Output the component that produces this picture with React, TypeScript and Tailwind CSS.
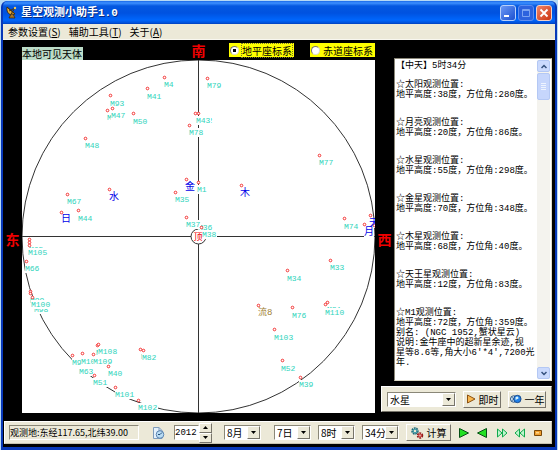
import type { ReactNode } from "react";

type Mark = { text: string; x: number; y: number; dots?: [number, number][]; kind?: "planet" | "meteor" };

const MARKS: Mark[] = [
  { text: "M4", x: 164, y: 84, dots: [[164, 77]] },
  { text: "M41", x: 147, y: 96, dots: [[147, 88]] },
  { text: "M93", x: 110, y: 103, dots: [[110, 95]] },
  { text: "M46", x: 107, y: 117, dots: [[107, 110]] },
  { text: "M47", x: 111, y: 115, dots: [[112, 108]] },
  { text: "M50", x: 133, y: 121, dots: [[133, 113]] },
  { text: "M48", x: 85, y: 145, dots: [[85, 138]] },
  { text: "M42", x: 198, y: 120, dots: [[198, 113]] },
  { text: "M43", x: 196, y: 120, dots: [[195, 113]] },
  { text: "M78", x: 189, y: 132, dots: [[189, 125]] },
  { text: "M79", x: 207, y: 85, dots: [[207, 78]] },
  { text: "M67", x: 67, y: 201, dots: [[67, 194]] },
  { text: "日", x: 61, y: 218, dots: [[61, 212]], kind: "planet" },
  { text: "M44", x: 78, y: 218, dots: [[78, 210]] },
  { text: "水", x: 109, y: 196, dots: [[109, 189]], kind: "planet" },
  { text: "M35", x: 175, y: 199, dots: [[175, 192]] },
  { text: "M1", x: 197, y: 189, dots: [[198, 182]] },
  { text: "金", x: 185, y: 186, dots: [[186, 179]], kind: "planet" },
  { text: "M36", x: 198, y: 227 },
  { text: "M37", x: 186, y: 224, dots: [[186, 217]] },
  { text: "M38", x: 202, y: 234, dots: [[201, 227]] },
  { text: "木", x: 240, y: 192, dots: [[241, 185]], kind: "planet" },
  { text: "M77", x: 319, y: 162, dots: [[319, 155]] },
  { text: "M74", x: 344, y: 226, dots: [[344, 218]] },
  { text: "天", x: 369, y: 222, dots: [[370, 215], [374, 225]], kind: "planet" },
  { text: "月", x: 364, y: 231, dots: [[364, 224]], kind: "planet" },
  { text: "M33", x: 330, y: 267, dots: [[330, 260]] },
  { text: "M34", x: 287, y: 278, dots: [[287, 270]] },
  { text: "流8", x: 258, y: 312, dots: [[258, 305]], kind: "meteor" },
  { text: "M76", x: 292, y: 315, dots: [[292, 307]] },
  { text: "M31", x: 327, y: 309, dots: [[327, 302]] },
  { text: "M110", x: 325, y: 312, dots: [[325, 304]] },
  { text: "M103", x: 274, y: 337, dots: [[274, 329]] },
  { text: "M52", x: 281, y: 368, dots: [[282, 360]] },
  { text: "M39", x: 299, y: 384, dots: [[300, 377]] },
  { text: "M65", x: 29, y: 249, dots: [[29, 239], [29, 242]] },
  { text: "M105", x: 28, y: 252, dots: [[29, 245]] },
  { text: "M66", x: 25, y: 268, dots: [[26, 261]] },
  { text: "M99", x: 30, y: 300, dots: [[30, 291], [30, 293]] },
  { text: "M98", x: 34, y: 309 },
  { text: "M100", x: 31, y: 304, dots: [[32, 297]] },
  { text: "M106", x: 96, y: 352, dots: [[97, 345]] },
  { text: "M108", x: 98, y: 351, dots: [[98, 344]] },
  { text: "M97", x: 72, y: 362, dots: [[72, 355]] },
  { text: "M10", x: 81, y: 361, dots: [[82, 353]] },
  { text: "M109", x: 93, y: 361, dots: [[93, 354]] },
  { text: "M63", x: 79, y: 371 },
  { text: "M51", x: 93, y: 382, dots: [[94, 375]] },
  { text: "M40", x: 108, y: 373, dots: [[108, 366]] },
  { text: "M101", x: 115, y: 394, dots: [[115, 387]] },
  { text: "M102", x: 138, y: 407, dots: [[138, 400]] },
  { text: "M81", x: 141, y: 356, dots: [[140, 349]] },
  { text: "M82", x: 142, y: 357, dots: [[143, 350]] },
];

const REPORT: string[][] = [
  ["☆太阳观测位置:", "地平高度:38度，方位角:280度。"],
  ["☆月亮观测位置:", "地平高度:20度，方位角:86度。"],
  ["☆水星观测位置:", "地平高度:55度，方位角:298度。"],
  ["☆金星观测位置:", "地平高度:70度，方位角:348度。"],
  ["☆木星观测位置:", "地平高度:68度，方位角:40度。"],
  ["☆天王星观测位置:", "地平高度:12度，方位角:83度。"],
  [
    "☆M1观测位置:",
    "地平高度:72度，方位角:359度。",
    "别名: (NGC 1952,蟹状星云)",
    "说明:金牛座中的超新星余迹,视",
    "星等8.6等,角大小6'*4',7200光",
    "年.",
  ],
];

const MENUS: [string, string][] = [
  ["参数设置", "S"],
  ["辅助工具", "T"],
  ["关于", "A"],
];

const SUNKEN = "border border-t-[#8a8778] border-l-[#8a8778] border-r-white border-b-white";
const RAISED = "border border-t-white border-l-white border-r-[#77746a] border-b-[#77746a] bg-[#ece9d8]";

function Sky() {
  return (
    <svg
      viewBox="22 60 353 353"
      className="block aspect-square w-full bg-white font-['Liberation_Mono','Noto_Sans_CJK_SC',monospace]"
      role="img"
      aria-label="本地可见天体"
    >
      <g fill="none" stroke="#333" strokeWidth="1">
        <circle cx="198.5" cy="236.5" r="176.5" />
        <path d="M198.5 60V413M22 236.5H375" />
      </g>
      <circle cx="198.5" cy="236.5" r="7.5" fill="#fff" stroke="#333" />
      {MARKS.map((m) => {
        const wide = m.kind === "planet";
        const color = wide ? "#0000e8" : m.kind === "meteor" ? "#a08030" : "#30d4bc";
        const width = wide ? 10 : m.kind === "meteor" ? 14 : m.text.length * 5;
        return (
          <g key={m.text}>
            <rect x={m.x} y={m.y - 4} width={width} height={wide ? 10 : 9} fill="#fff" />
            {m.dots?.map(([x, y]) => (
              <circle key={`${x}-${y}`} cx={x + 0.5} cy={y + 0.5} r="1.3" fill="#fff" stroke="#f02020" strokeWidth="0.9" />
            ))}
            <text x={m.x} y={m.y + (wide ? 4 : 3)} fontSize={wide ? 10 : m.kind ? 9 : 8} fill={color}>
              {m.text}
            </text>
          </g>
        );
      })}
      <text x="198" y="240" textAnchor="middle" fontSize="9" fill="#f00000">顶</text>
    </svg>
  );
}

function Drop({ label, value, width, options }: { label: string; value: string; width: string; options: string[] }) {
  return (
    <div className={`relative h-[15px] shrink-0 bg-white ${width} ${SUNKEN}`}>
      <select
        aria-label={label}
        defaultValue={value}
        className="block h-full w-full appearance-none bg-transparent pl-[2px] text-[10px] leading-[13px] outline-none"
      >
        {options.map((o) => (
          <option key={o}>{o}</option>
        ))}
      </select>
      <span className={`pointer-events-none absolute inset-y-0 right-0 flex w-[13px] items-center justify-center ${RAISED}`}>
        <svg width="5" height="3" viewBox="0 0 5 3">
          <path d="M0 0H5L2.5 3Z" />
        </svg>
      </span>
    </div>
  );
}

function PushButton({ width, icon, children }: { width: string; icon: ReactNode; children: ReactNode }) {
  return (
    <button type="button" className={`flex h-[17px] shrink-0 items-center justify-center gap-[3px] whitespace-nowrap text-[10px] leading-[13px] ${width} ${RAISED}`}>
      {icon}
      {children}
    </button>
  );
}

function Radio({ label, checked }: { label: string; checked?: boolean }) {
  return (
    <label className="flex h-[14px] items-center gap-[3px] bg-[#ffff00] pr-[2px] pl-[1px] text-[10px] leading-[13px] text-black">
      <input
        type="radio"
        name="coordinates"
        defaultChecked={checked}
        className="h-[9px] w-[9px] appearance-none rounded-full border border-t-[#77746a] border-r-[#dddac8] border-b-[#dddac8] border-l-[#77746a] bg-white checked:bg-[radial-gradient(circle,#000_0_1.5px,#fff_2px)]"
      />
      <span className={checked ? "outline outline-1 outline-dotted outline-[#77742a]" : ""}>{label}</span>
    </label>
  );
}

type PlayName = "play" | "back" | "forward" | "rewind" | "stop";

function PlayButton({ label, name }: { label: string; name: PlayName }) {
  const flip = name === "back" || name === "rewind" ? "translate(12 0) scale(-1 1)" : undefined;
  return (
    <button type="button" aria-label={label}>
      <svg width="12" height="12" viewBox="0 0 12 12" className="shrink-0">
        <g transform={flip}>
          {(name === "play" || name === "back") && (
            <path d="M1.5 1.5L10.5 6L1.5 10.5Z" fill="#22e022" stroke="#064f16" />
          )}
          {(name === "forward" || name === "rewind") && (
            <path d="M1.5 2L6 6L1.5 10ZM6.5 2L11 6L6.5 10Z" fill="#c0f5cf" stroke="#0faa4c" />
          )}
          {name === "stop" && <path d="M2.5 3.5H9.5V8.5H2.5Z" fill="#f0a030" stroke="#7a4808" />}
          {name === "stop" && <path d="M4 5H7V6.5H4Z" fill="#ffd68a" />}
        </g>
      </svg>
    </button>
  );
}

function TitleBar() {
  const box = "flex h-4 w-4 items-center justify-center rounded-[3px] border";
  return (
    <header className="flex h-[23px] items-center justify-between rounded-t-[5px] bg-[linear-gradient(to_bottom,#1868e8_0,#3c90ff_2px,#0458e0_5px,#0052e0_12px,#0066fc_19px,#0050d8_22px,#003cb8_23px)] pr-[3px] pl-[3px]">
      <div className="flex items-center gap-1">
        <svg width="11" height="13" viewBox="0 0 11 13">
          <path d="M1 1Q0 7 5 9L9 8Z" fill="#e8ae38" stroke="#30220c" strokeWidth=".8" />
          <path d="M1 1L9 8M3 5L9 2M9 2L5 8" stroke="#4a3410" fill="none" />
          <path d="M5 8L3 12H9L7 8Z" fill="#a87424" stroke="#30220c" strokeWidth=".7" />
          <circle cx="9" cy="2" r="1.2" fill="#f5c956" />
        </svg>
        <h1 className="font-['Liberation_Mono','Noto_Sans_CJK_SC',monospace] text-[11px] leading-4 font-bold text-white [text-shadow:1px_1px_0_#062a80]">
          星空观测小助手1.0
        </h1>
      </div>
      <div className="flex gap-[2px]">
        <button type="button" aria-label="最小化" className={`${box} border-[#b8d0fa] bg-[linear-gradient(135deg,#6a98f5,#1c50d0)]`}>
          <svg width="10" height="10" viewBox="0 0 10 10"><path d="M1 7H6V9H1Z" fill="#fff" /></svg>
        </button>
        <button type="button" aria-label="最大化" disabled className={`${box} border-[#5a8cf0] bg-[#2c62de]`}>
          <svg width="10" height="10" viewBox="0 0 10 10" fill="none" stroke="#7ba3f2"><path d="M1.5 1.5H8.5V8.5H1.5ZM1.5 2.5H8.5" /></svg>
        </button>
        <button type="button" aria-label="关闭" className={`${box} border-[#f2cfc6] bg-[linear-gradient(135deg,#f08468,#cc3410)]`}>
          <svg width="10" height="10" viewBox="0 0 10 10"><path d="M1.5 1.5L8.5 8.5M8.5 1.5L1.5 8.5" stroke="#fff" strokeWidth="1.8" /></svg>
        </button>
      </div>
    </header>
  );
}

function ScrollButton({ label, up }: { label: string; up?: boolean }) {
  return (
    <button type="button" aria-label={label} className="flex h-[12px] w-full items-center justify-center rounded-[2px] border border-[#b4c8f4] bg-[#cbdafd]">
      <svg width="6" height="5" viewBox="0 0 6 5" fill="none" stroke="#34507c" strokeWidth="1.5">
        <path d={up ? "M.5 4L3 1.5L5.5 4" : "M.5 1L3 3.5L5.5 1"} />
      </svg>
    </button>
  );
}

function ReportPanel() {
  return (
    <div className="flex min-h-0 flex-1 border border-t-[#8a8778] border-l-[#8a8778] border-r-[#dddac8] border-b-[#dddac8] bg-white p-px">
      <div
        tabIndex={0}
        role="region"
        aria-label="观测结果"
        className="min-w-0 flex-1 overflow-hidden pt-px font-['Liberation_Mono','Noto_Sans_CJK_SC',monospace] text-[9px] leading-[10px] whitespace-nowrap outline-none"
      >
        <p className="pb-[9px]">【中天】5时34分</p>
        <div className="flex flex-col gap-[18px]">
          {REPORT.map((lines) => (
            <div key={lines[0]}>
              {lines.map((line) => (
                <p key={line}>{line}</p>
              ))}
            </div>
          ))}
        </div>
      </div>
      <div className="flex w-[13px] shrink-0 flex-col bg-[#f4f3ee]">
        <ScrollButton label="向上滚动" up />
        <div className="mt-px flex h-[27px] flex-col items-center justify-center gap-px rounded-[2px] border border-[#b4c8f4] bg-[#c6d6fc]">
          {[0, 1, 2, 3].map((n) => (
            <span key={n} className="h-px w-[5px] bg-[#eef4fe]" />
          ))}
        </div>
        <div className="flex-1" />
        <ScrollButton label="向下滚动" />
      </div>
    </div>
  );
}

function Controls() {
  return (
    <footer className="mt-2 mr-[3px] ml-px flex h-[23px] items-center gap-[7px] border border-t-white border-l-white border-r-[#c8c4b0] border-b-[#c8c4b0] bg-[#ece9d8] pr-[7px] pl-1">
      <p className={`mr-[6px] flex h-[15px] w-[130px] shrink-0 items-center text-[9px] whitespace-nowrap ${SUNKEN}`}>
        观测地:东经117.65,北纬39.00
      </p>
      <svg width="13" height="14" viewBox="0 0 13 14" className="shrink-0">
        <path d="M1.5 1.5H7L10 4.5V12.5H1.5Z" fill="#e4f1fc" stroke="#7e9cbc" />
        <path d="M7 1.5V5H10" fill="none" stroke="#7e9cbc" />
        <circle cx="8" cy="8.5" r="3.8" fill="#b8dcf4" stroke="#5c84b0" />
        <path d="M8 8.5L10 6.5M8 8.5H6" stroke="#244c78" fill="none" />
      </svg>
      <div className="mr-[5px] ml-[2px] flex shrink-0 items-center">
        <input
          aria-label="年"
          defaultValue="2012"
          className={`h-[15px] w-[25px] rounded-none bg-white font-['Liberation_Mono',monospace] text-[9px] outline-none ${SUNKEN}`}
        />
        <div className="flex w-[13px] flex-col">
          <button type="button" aria-label="增加年份" className={`flex h-[10px] items-center justify-center ${RAISED}`}>
            <svg width="5" height="3" viewBox="0 0 5 3"><path d="M0 3H5L2.5 0Z" /></svg>
          </button>
          <button type="button" aria-label="减少年份" className={`flex h-[10px] items-center justify-center ${RAISED}`}>
            <svg width="5" height="3" viewBox="0 0 5 3"><path d="M0 0H5L2.5 3Z" /></svg>
          </button>
        </div>
      </div>
      <div className="mr-[6px]">
        <Drop label="月" value="8月" width="w-[37px]" options={["7月", "8月", "9月"]} />
      </div>
      <Drop label="日" value="7日" width="w-[37px]" options={["6日", "7日", "8日"]} />
      <Drop label="时" value="8时" width="w-[37px]" options={["7时", "8时", "9时"]} />
      <Drop label="分" value="34分" width="w-[37px]" options={["33分", "34分", "35分"]} />
      <PushButton
        width="w-[45px]"
        icon={
          <svg width="13" height="12" viewBox="0 0 13 12" fill="none">
            <circle cx="4" cy="4" r="2.5" stroke="#236878" strokeWidth="2.5" strokeDasharray="1.5 .6" />
            <circle cx="4" cy="4" r="2" stroke="#3aa0ac" />
            <circle cx="9" cy="8.5" r="2" stroke="#8c1c1c" strokeWidth="2.5" strokeDasharray="1.4 .6" />
            <circle cx="9" cy="8.5" r="1.5" stroke="#e04848" />
          </svg>
        }
      >
        计算
      </PushButton>
      <div className="flex gap-[6px]">
        <PlayButton label="播放" name="play" />
        <PlayButton label="倒放" name="back" />
      </div>
      <div className="ml-auto flex gap-[6px]">
        <PlayButton label="快进" name="forward" />
        <PlayButton label="快退" name="rewind" />
        <PlayButton label="停止" name="stop" />
      </div>
    </footer>
  );
}

export default function App() {
  return (
    <div className="bg-[#b5d9f4] px-px pt-px font-['Noto_Sans_CJK_SC',sans-serif] text-black">
      <div className="rounded-t-[6px] bg-[#0838b8] px-[2px] pb-[3px]">
        <TitleBar />
        <nav className="flex h-4 items-center gap-2 border-b border-[#f8f7f0] bg-[#ece9d8] pl-[5px] text-[10px] leading-[14px]">
          {MENUS.map(([name, key]) => (
            <button type="button" key={name}>
              {name}(<u>{key}</u>)
            </button>
          ))}
        </nav>
        <main className="bg-black pb-[3px]">
          <div className="flex">
            <div className="flex w-[19px] shrink-0 items-center justify-center pt-6 text-[14px] leading-4 font-bold text-[#f00000]">
              东
            </div>
            <div className="min-w-0 flex-1">
              <div className="grid h-5 grid-cols-[1fr_auto_1fr] items-center">
                <h2 className="mt-[6px] justify-self-start bg-[#bcdcc8] pr-px text-[10px] leading-[13px]">本地可见天体</h2>
                <span className="text-[14px] leading-4 font-bold text-[#f00000]">南</span>
                <fieldset className="flex gap-4 justify-self-end">
                  <Radio label="地平座标系" checked />
                  <Radio label="赤道座标系" />
                </fieldset>
              </div>
              <Sky />
            </div>
            <div className="flex w-[19px] shrink-0 items-center justify-center pt-6 text-[14px] leading-4 font-bold text-[#f00000]">
              西
            </div>
            <aside className="mr-[3px] flex w-[158px] shrink-0 flex-col gap-[5px] pt-[18px] pb-px">
              <ReportPanel />
              <div className={`-ml-[13px] flex h-[26px] items-center gap-[7px] px-[5px] ${RAISED}`}>
                <Drop label="天体" value="水星" width="w-[69px]" options={["金星", "水星", "木星"]} />
                <PushButton
                  width="w-[38px]"
                  icon={
                    <svg width="10" height="10" viewBox="0 0 10 10">
                      <path d="M1.5 1L9 5L1.5 9Z" fill="#f8b850" stroke="#8c5010" />
                    </svg>
                  }
                >
                  即时
                </PushButton>
                <PushButton
                  width="w-[38px]"
                  icon={
                    <svg width="12" height="10" viewBox="0 0 13 10">
                      <circle cx="4" cy="5" r="3.5" fill="#d8ecfc" stroke="#244c78" />
                      <circle cx="8" cy="5" r="4" fill="#2080e8" stroke="#184888" />
                      <path d="M6 3Q8 1.5 9 3T8 5L6 6Z" fill="#d8f4fc" />
                      <path d="M2 3L4 5L2 7" fill="none" stroke="#244c78" />
                    </svg>
                  }
                >
                  一年
                </PushButton>
              </div>
            </aside>
          </div>
          <Controls />
        </main>
      </div>
    </div>
  );
}
